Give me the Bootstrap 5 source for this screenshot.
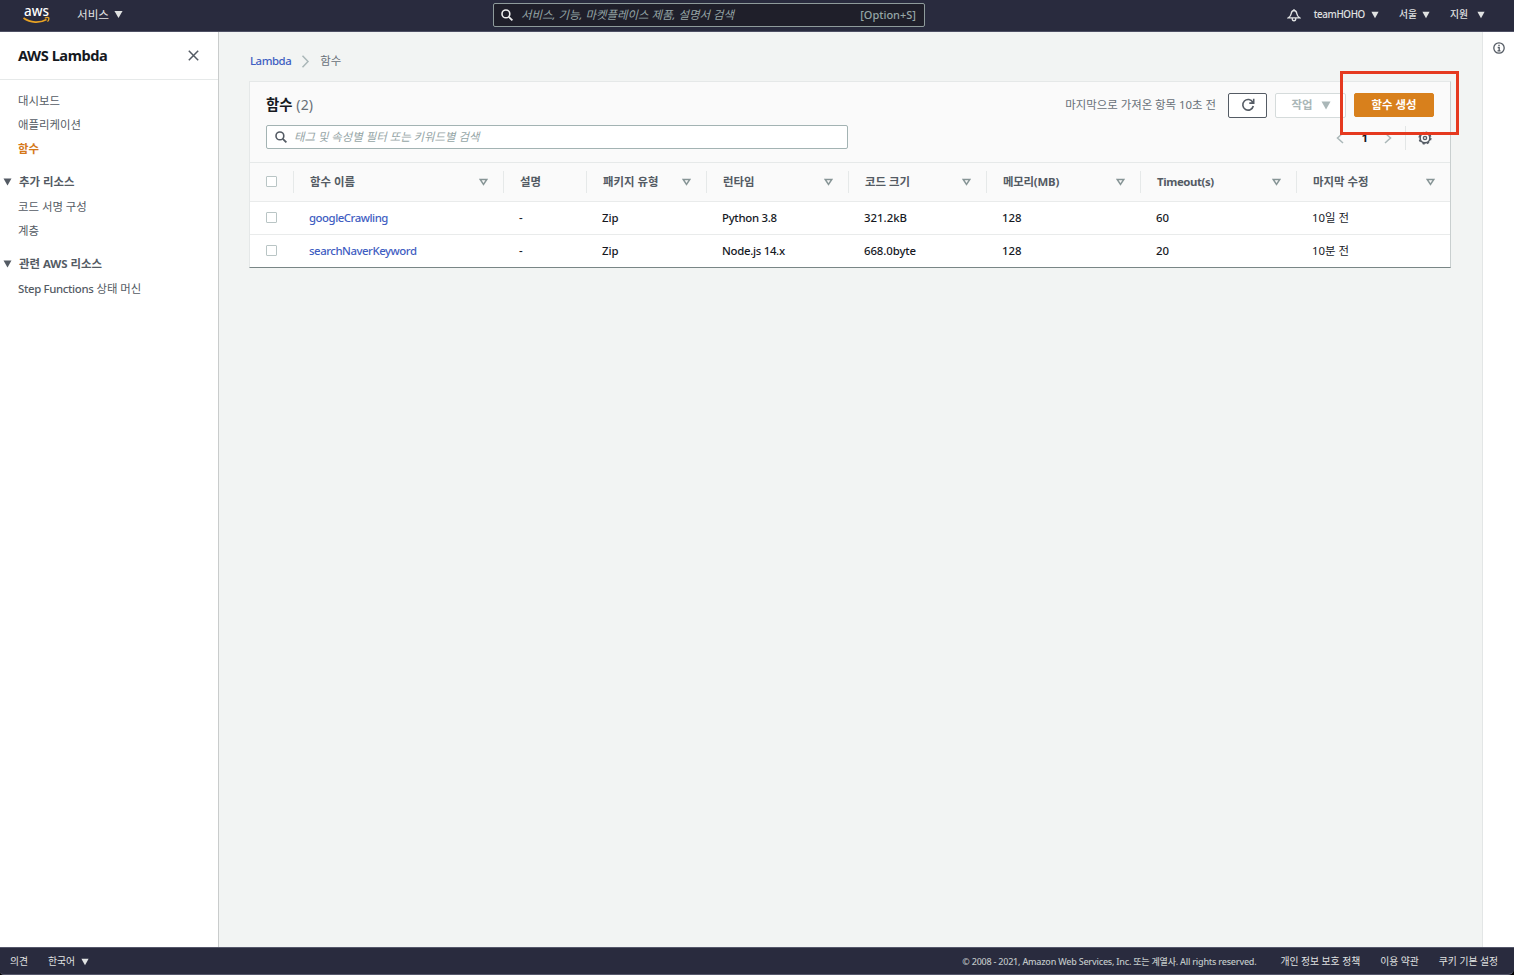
<!DOCTYPE html>
<html lang="ko">
<head>
<meta charset="utf-8">
<title>AWS Lambda</title>
<link href="https://cdn.jsdelivr.net/npm/bootstrap@5.3.0/dist/css/bootstrap.min.css" rel="stylesheet">
<style>
body{font-family:"Noto Sans","Noto Sans CJK KR",sans-serif;font-size:11.4px;line-height:16px;color:#16191f;background:#000;height:975px;overflow:hidden}
a{text-decoration:none}
svg{display:block;flex:none}
.shell{height:975px}
.topbar{height:32px;background:#292b3e;border-bottom:1px solid #4e5064;color:#e0e2e2;padding-bottom:2px}
.logo{margin-left:22px;width:28px;height:28px}
.services{margin-left:27px;gap:5px;font-size:11.6px}
.global-search{width:432px;height:24px;margin-left:370px;margin-top:1px;background:#1f1f2a;border:1px solid #8e9b9b;border-radius:2px;padding:0 8px 0 7px;color:#95a5a6}
.global-search i{margin-left:8px;font-size:11.45px}
.global-search span{font-weight:500;font-size:11px}
.account{font-size:9.8px;font-weight:500;margin-right:29px}
.account .item{gap:5px;margin-left:20px}
.account .item.user{margin-left:13px;gap:6px}
.user span{letter-spacing:-.38px}
.sidebar{width:219px;border-right:1px solid #c9cccc;background:#fff;color:#545b64;flex:none}
.side-head{height:48px;border-bottom:1px solid #e6e9e9;padding:0 19px 0 18px;color:#16191f}
.side-head h1{font-size:14.6px;font-weight:700;margin:0;letter-spacing:-.45px}
.side-list{padding-top:8px}
.side-list a,.side-list .group{display:flex;align-items:center;height:24px;color:#545b64;padding-left:18px}
.side-list a{padding-top:1px}
.side-list a.current{color:#d5791a;font-weight:700}
.side-list .group{padding-left:3px;gap:7px;font-weight:700;margin-top:9px;height:25px}
.side-list a.step{letter-spacing:-.34px;font-weight:500}
.side-list a.step span{font-weight:400;letter-spacing:0;margin-left:3px}
.content{background:#f2f4f3;padding:0 31px 0 31px}
.crumbs{height:49px;padding-top:9px;color:#687078}
.crumbs a,.fn-link{color:#3f5ec2;font-weight:500;letter-spacing:-.47px}
.panel{background:#fff;border:1px solid #e5e8e8;border-right-color:#c9cfcf;border-bottom:1px solid #798686;height:187px;margin-left:-1px;width:1202px}
.panel-top{background:#fafafa;height:80px;padding:0 16px}
.panel h2{font-size:14.4px;line-height:20px;font-weight:700;margin:0}
.panel h2 span{font-weight:400;color:#687078;font-size:14px;letter-spacing:.2px}
.fetched{color:#687078}
.tool{height:25px;border-radius:2px;border:1px solid #545b64;background:#fff;padding:0;font-size:11.4px;line-height:16px;font-weight:700}
.refresh{width:39px;margin-left:12px}
.actions{width:71px;margin-left:8px;border-color:#d5dbdb;color:#aab7b8;gap:9px;padding-left:2px}
.create{width:80px;margin-left:8px;height:24px;background:#d8801c;border-color:#d8801c;color:#fff}
.filter{width:582px;height:24px;border:1px solid #a3b3b3;border-radius:2px;background:#fff;padding-left:8px;color:#95a5a6;gap:7px}
.pager{height:26px;margin-right:2px}
.pager b{margin:0 16px 0 17px}
.pager .rule{border-left:1px solid #e3e6e6;height:24px;margin:0 12px 0 13px}
.functions{table-layout:fixed;width:100%;margin:0;border-collapse:separate;border-spacing:0}
.functions th,.functions td{padding:0;background:#fff;box-shadow:none;border-bottom:1px solid #e9ebeb;height:33px;vertical-align:middle;color:#16191f}
.functions td{padding-left:16px;font-weight:500}
.functions td.ko{font-weight:400}
.functions td.tight{letter-spacing:-.3px}
.functions td.size{letter-spacing:-.1px}
.functions tr:last-child td{border-bottom:0;height:32px}
.functions thead th{background:#fafafa;border-top:1px solid #e6e9e9;height:40px;color:#545b64;font-weight:700}
.functions thead th>div{height:22px;padding:0 15px 0 16px;border-left:1px solid #e6e9e9}
.functions thead th:first-child>div{border:0}
.functions thead .lat{letter-spacing:-.4px}
.functions thead .lat2{letter-spacing:-.2px}
.tick{width:11px;height:11px;border:1px solid #b9c5c5;border-radius:1px;background:#fff;display:block;margin-top:-1px}
.rail{width:33px;border-left:1px solid #e3e6e6;background:#fff;padding:10px 1px 0 0;flex:0 0 33px}
.bottombar{height:28px;background:#292b3e;border:1px solid #55576a;border-width:1px 0;border-radius:0 0 6px 4px;color:#e0e2e2;font-size:9.8px;padding:1px 16px 0 10px}
.bottombar .link{margin-left:20px}
.bottombar .copy{color:#c0c7c7;font-size:9px;margin-right:24px;letter-spacing:-.22px;font-weight:500}
.marker{position:absolute;left:1340px;top:71px;width:119px;height:64px;border:3px solid #e5391f}
</style>
<script src="https://cdn.jsdelivr.net/npm/bootstrap@5.3.0/dist/js/bootstrap.bundle.min.js"></script>
</head>
<body>
<svg width="0" height="0" class="position-absolute">
<symbol id="down" viewBox="0 0 10 9"><path d="M.5.5h9L5 8.5z" fill="currentColor"/></symbol>
<symbol id="sort" viewBox="0 0 9 8"><path d="M1.200 1.400h6.600L4.500 6.400z" fill="none" stroke="#879596" stroke-width="1.500"/></symbol>
<symbol id="lens" viewBox="0 0 12 12"><circle cx="4.900" cy="4.900" r="3.900" fill="none" stroke="currentColor" stroke-width="1.600"/><path d="M7.800 7.800l3.600 3.600" stroke="currentColor" stroke-width="1.800"/></symbol>
</svg>
<div class="shell d-flex flex-column position-relative">
<header class="topbar d-flex align-items-center">
<svg class="logo" viewBox="0 -4 28 28"><text x="2" y="11.300" textLength="25" lengthAdjust="spacingAndGlyphs" font-size="14" font-weight="500" fill="#fff">aws</text><path d="M1.500 13c7 5.200 16.500 5.200 23 1.500" fill="none" stroke="#e8a324" stroke-width="1.600"/><path d="M22.800 13c1.500-.7 3.500-.7 4 0 .3 1-.4 2.700-1.300 3.600" fill="none" stroke="#e8a324" stroke-width="1.300"/></svg>
<div class="services d-flex align-items-center"><span>서비스</span><svg width="9" height="9"><use href="#down"/></svg></div>
<div class="global-search d-flex align-items-center"><svg width="12" height="12" color="#eee"><use href="#lens"/></svg><i>서비스, 기능, 마켓플레이스 제품, 설명서 검색</i><span class="ms-auto">[Option+S]</span></div>
<div class="account d-flex align-items-center ms-auto"><svg width="14" height="14" viewBox="0 0 14 14" fill="none" stroke="#e0e2e2" stroke-width="1.300"><path d="M1.300 9.900h11.400c-1.800-1.200-2.600-2.200-2.900-4.300C9.500 3.200 8.600 2.500 7 2.500S4.500 3.200 4.200 5.600C3.900 7.700 3.100 8.700 1.300 9.900zM7 2.500V1M5.200 10.200c0 3.400 3.600 3.400 3.600 0"/></svg>
<div class="item user d-flex align-items-center"><span>teamHOHO</span><svg width="8" height="8"><use href="#down"/></svg></div>
<div class="item d-flex align-items-center"><span>서울</span><svg width="8" height="8"><use href="#down"/></svg></div>
<div class="item d-flex align-items-center"><span>지원</span><svg class="ms-1" width="8" height="8"><use href="#down"/></svg></div></div>
</header>
<div class="d-flex flex-grow-1">
<nav class="sidebar">
<div class="side-head d-flex align-items-center justify-content-between"><h1>AWS Lambda</h1><svg width="11" height="11" viewBox="0 0 11 11"><path d="M.8.8l9.400 9.400M10.200.8L.8 10.200" stroke="#545b64" stroke-width="1.500"/></svg></div>
<div class="side-list"><a href="#">대시보드</a><a href="#">애플리케이션</a><a href="#" class="current">함수</a>
<div class="group"><svg width="9" height="8"><use href="#down"/></svg>추가 리소스</div><a href="#">코드 서명 구성</a><a href="#">계층</a>
<div class="group"><svg width="9" height="8"><use href="#down"/></svg>관련 AWS 리소스</div><a href="#" class="step">Step Functions <span>상태 머신</span></a></div>
</nav>
<main class="content flex-grow-1">
<div class="crumbs d-flex align-items-center"><a href="#">Lambda</a><svg class="mx-2" width="13" height="13" viewBox="0 0 13 13"><path d="M3.500.8l5.500 5.700-5.500 5.700" fill="none" stroke="#aab7b8" stroke-width="1.500"/></svg><span>함수</span></div>
<section class="panel">
<div class="panel-top">
<div class="d-flex align-items-center" style="height:43px;padding-top:3px"><h2>함수 <span>(2)</span></h2><span class="ms-auto fetched">마지막으로 가져온 항목 10초 전</span>
<button class="tool refresh d-flex align-items-center justify-content-center"><svg width="14" height="14" viewBox="0 0 14 14"><path d="M11.800 4.300A5.300 5.300 0 1 0 12.300 8M12.700.8v4.300H8.300" fill="none" stroke="#545b64" stroke-width="1.600"/></svg></button>
<button class="tool actions d-flex align-items-center justify-content-center">작업<svg width="10" height="9"><use href="#down"/></svg></button><button class="tool create">함수 생성</button></div>
<div class="d-flex justify-content-between align-items-start"><div class="filter d-flex align-items-center"><svg width="12" height="12" color="#545b64"><use href="#lens"/></svg><i>태그 및 속성별 필터 또는 키워드별 검색</i></div>
<div class="pager d-flex align-items-center"><svg width="8" height="12" viewBox="0 0 8 12"><path d="M7 1L1.500 6 7 11" fill="none" stroke="#aab7b8" stroke-width="1.500"/></svg><b>1</b><svg width="8" height="12" viewBox="0 0 8 12"><path d="M1 1l5.500 5L1 11" fill="none" stroke="#aab7b8" stroke-width="1.500"/></svg><span class="rule"></span><svg width="14" height="14" viewBox="0 0 14 14" fill="none" stroke="#545b64"><circle cx="7" cy="7" r="4.900" stroke-width="1.600"/><circle cx="7" cy="7" r="5.900" stroke-width="1.300" stroke-dasharray="2.317 2.317"/><circle cx="7" cy="7" r="1.600" stroke-width="1.400"/></svg></div></div>
</div>
<table class="table functions"><colgroup><col style="width:43px"><col style="width:210px"><col style="width:83px"><col style="width:120px"><col style="width:142px"><col style="width:138px"><col style="width:154px"><col style="width:156px"><col></colgroup>
<thead><tr><th><div class="d-flex align-items-center"><span class="tick"></span></div></th>
<th><div class="d-flex align-items-center justify-content-between">함수 이름<svg width="9" height="8"><use href="#sort"/></svg></div></th>
<th><div class="d-flex align-items-center">설명</div></th>
<th><div class="d-flex align-items-center justify-content-between">패키지 유형<svg width="9" height="8"><use href="#sort"/></svg></div></th>
<th><div class="d-flex align-items-center justify-content-between">런타임<svg width="9" height="8"><use href="#sort"/></svg></div></th>
<th><div class="d-flex align-items-center justify-content-between">코드 크기<svg width="9" height="8"><use href="#sort"/></svg></div></th>
<th><div class="d-flex align-items-center justify-content-between"><span class="lat2">메모리(MB)</span><svg width="9" height="8"><use href="#sort"/></svg></div></th>
<th><div class="d-flex align-items-center justify-content-between"><span class="lat">Timeout(s)</span><svg width="9" height="8"><use href="#sort"/></svg></div></th>
<th><div class="d-flex align-items-center justify-content-between">마지막 수정<svg width="9" height="8"><use href="#sort"/></svg></div></th></tr></thead>
<tbody><tr><td><span class="tick"></span></td><td><a class="fn-link" href="#">googleCrawling</a></td><td>-</td><td>Zip</td><td class="tight">Python 3.8</td><td>321.2kB</td><td>128</td><td>60</td><td class="ko">10일 전</td></tr>
<tr><td><span class="tick"></span></td><td><a class="fn-link" href="#">searchNaverKeyword</a></td><td>-</td><td>Zip</td><td class="tight">Node.js 14.x</td><td class="size">668.0byte</td><td>128</td><td>20</td><td class="ko">10분 전</td></tr></tbody></table>
</section>
</main>
<aside class="rail d-flex justify-content-center align-items-start"><svg width="12" height="12" viewBox="0 0 12 12" fill="none" stroke="#545b64"><circle cx="6" cy="6" r="5.200" stroke-width="1.300"/><path d="M4.700 5.500h1.500v3.200M4.500 8.800h3M5.300 3.400h1.400" stroke-width="1.300"/></svg></aside>
</div>
<footer class="bottombar d-flex align-items-center"><span>의견</span><span class="link">한국어</span><svg style="margin-left:6px" width="8" height="8"><use href="#down"/></svg>
<span class="copy ms-auto">© 2008 - 2021, Amazon Web Services, Inc. 또는 계열사. All rights reserved.</span><span>개인 정보 보호 정책</span><span class="link">이용 약관</span><span class="link">쿠키 기본 설정</span></footer>
<div class="marker"></div>
</div>
</body>
</html>
